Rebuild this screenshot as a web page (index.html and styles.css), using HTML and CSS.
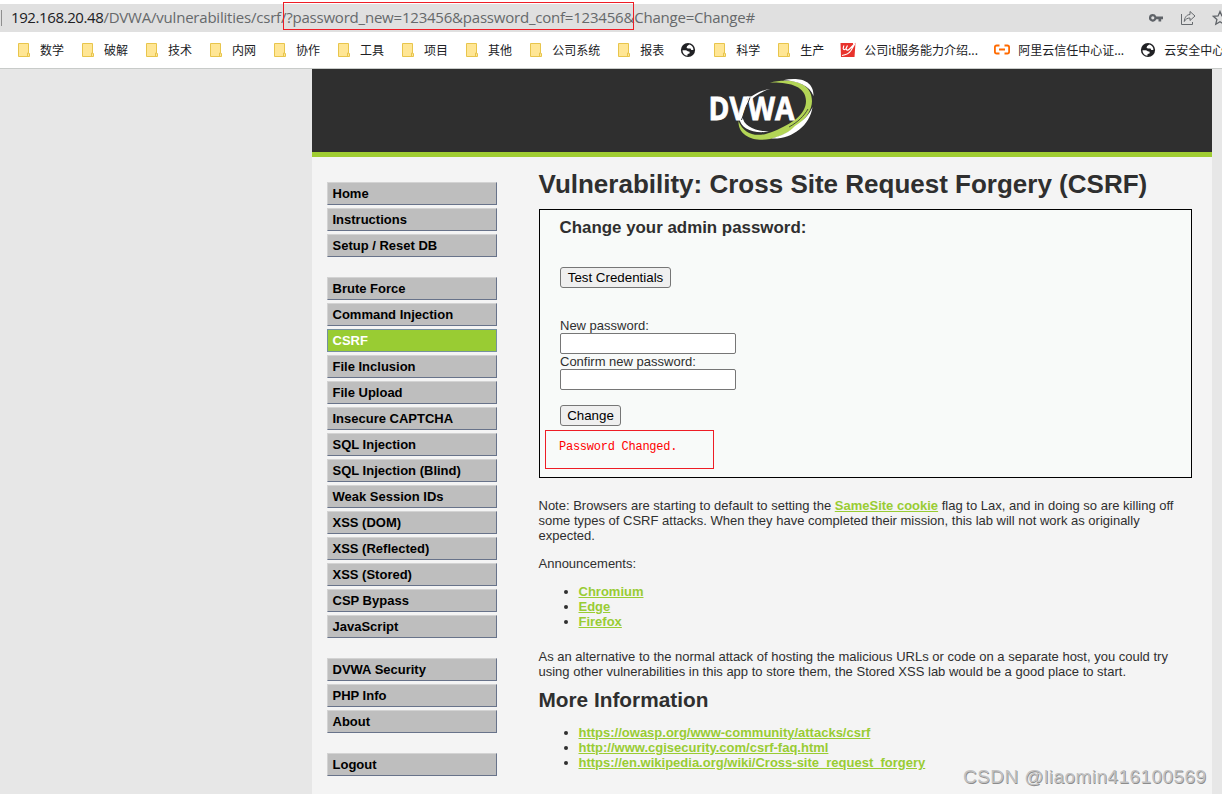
FILE: index.html
```html
<!DOCTYPE html>
<html lang="en">
<head>
<meta charset="utf-8">
<title>Vulnerability: Cross Site Request Forgery (CSRF)</title>
<link rel="stylesheet" href="styles.css">
</head>
<body>
<svg width="0" height="0" class="defs">
  <symbol id="folder" viewBox="0 0 16 16"><path d="M2.500 1.500h10v10h1v3H2.500z" fill="#ffe695" stroke="#e8c54c"/><path d="M11.500 14v-3l1-.8" fill="none" stroke="#e8c54c"/></symbol>
  <symbol id="globe" viewBox="0 0 16 16"><circle cx="8" cy="8" r="7.100" fill="#202124"/><path d="M9.200 2.600L7 4.200 6.600 6l1.600.6h2.300l.8 1.500h2.100c.2-2.700-1.500-5-4.200-5.500zM2.500 8.300h3.600l1.700 1 1.900.4-.2 1.700-1.900.5-.2 1.800C4.600 13.500 2.500 11.300 2.500 8.300z" fill="#fff"/></symbol>
</svg>
<div class="browser">
  <div class="address">
    <span class="sep"></span>
    <div class="url"><span class="host">192.168.20.48</span>/DVWA/vulnerabilities/csrf/?password_new=123456&amp;password_conf=123456&amp;Change=Change#</div>
    <div class="tools">
      <svg width="16" height="16" viewBox="0 0 16 16"><path fill="#5f6368" fill-rule="evenodd" d="M4.800 4a3.800 3.800 0 1 0 3.500 5.200h2.200v2.300h2.700V9.200H15V6.400H8.300A3.800 3.800 0 0 0 4.800 4zm0 2.200a1.600 1.600 0 1 1 0 3.200 1.600 1.600 0 0 1 0-3.200z"/></svg>
      <svg width="16" height="16" viewBox="0 0 16 16"><path fill="none" stroke="#666a6e" d="M1.500 4v10.500h11V12M10 1.500l5 4.500-5 4.500V8C7.500 8 5.500 9 4.300 11.500 4.500 7.500 6.500 4.700 10 4.500z"/></svg>
      <svg width="16" height="16" viewBox="0 0 16 16"><path fill="none" stroke="#5f6368" stroke-width="1.300" d="M8 1.500l1.900 4.400 4.800.4-3.600 3.200 1.100 4.700L8 11.700l-4.200 2.500 1.100-4.700L1.300 6.300l4.800-.4z"/></svg>
    </div>
    <div class="url-mark"></div>
  </div>
  <div class="bookmarks">
    <span><svg><use href="#folder"/></svg>数学</span>
    <span><svg><use href="#folder"/></svg>破解</span>
    <span><svg><use href="#folder"/></svg>技术</span>
    <span><svg><use href="#folder"/></svg>内网</span>
    <span><svg><use href="#folder"/></svg>协作</span>
    <span><svg><use href="#folder"/></svg>工具</span>
    <span><svg><use href="#folder"/></svg>项目</span>
    <span><svg><use href="#folder"/></svg>其他</span>
    <span><svg><use href="#folder"/></svg>公司系统</span>
    <span><svg><use href="#folder"/></svg>报表</span>
    <span><svg><use href="#globe"/></svg></span>
    <span><svg><use href="#folder"/></svg>科学</span>
    <span><svg><use href="#folder"/></svg>生产</span>
    <span><svg viewBox="0 0 16 16"><path d="M.5 1H13v1.500L15.500.8 14.500 15H1z" fill="#e8322c"/><path d="M3.800 3.500L3.200 6.500c0 1.500 2 1.500 2.800 0L7.500 3.500M6.500 6.500c-.5 2 1.500 2 3 .5L15 1.500 11 8.500c-2 3-5.500 4.500-9 5" fill="none" stroke="#fff" stroke-width="1.200"/></svg><b class="w114">公司it服务能力介绍...</b></span>
    <span><svg viewBox="0 0 16 16"><path d="M5.500 3.500H2.700Q.9 3.500.9 5.300v4.400q0 1.800 1.800 1.800h2.800M10.500 3.500h2.800q1.800 0 1.800 1.800v4.400q0 1.800-1.800 1.800h-2.800M5 7.500h6" fill="none" stroke="#ff6a00" stroke-width="1.800"/></svg><b class="w106">阿里云信任中心证...</b></span>
    <span><svg><use href="#globe"/></svg>云安全中心</span>
  </div>
</div>
<div class="container">
  <header class="header">
    <svg width="110" height="64" viewBox="0 0 110 64">
      <path d="M63 11C49 15 35 27 35.500 38c.5 10 12 15 26.500 15.500C47 56 33 51 32.500 40 32 26 47 13 63 11z" fill="#fff"/>
      <path d="M63 4.500C82 0 105 3 105 23c0 17-22 34-42 38C47 64 31 58 31.500 43c6 15 20 17 36 10C84 46 99 37 99 23 99 8 82 4 63 4.500z" fill="#b3d556"/>
      <path d="M76 2.300C90-1 107 1 106.500 18 103 8 91 2.500 76 2.300z" fill="#fff"/>
      <path d="M105.500 29C103 48 84 62 64 60.500 75 58 82 54 88 48 96 43 102 37 105.500 29z" fill="#fff"/>
      <path d="M82 49C91 44 97 38 101 31" fill="none" stroke="#2f2f2f" stroke-width=".8"/>
      <text x="1.500" y="42" textLength="86" lengthAdjust="spacingAndGlyphs" class="logo">DVWA</text>
      <path d="M34.500 42L43 19.500" stroke="#2f2f2f" stroke-width="1"/>
    </svg>
  </header>
  <div class="columns">
    <nav class="menu">
      <ul><li>Home</li><li>Instructions</li><li>Setup / Reset DB</li></ul>
      <ul><li>Brute Force</li><li>Command Injection</li><li class="selected">CSRF</li><li>File Inclusion</li><li>File Upload</li><li>Insecure CAPTCHA</li><li>SQL Injection</li><li>SQL Injection (Blind)</li><li>Weak Session IDs</li><li>XSS (DOM)</li><li>XSS (Reflected)</li><li>XSS (Stored)</li><li>CSP Bypass</li><li>JavaScript</li></ul>
      <ul><li>DVWA Security</li><li>PHP Info</li><li>About</li></ul>
      <ul><li>Logout</li></ul>
    </nav>
    <main class="body">
      <h1>Vulnerability: Cross Site Request Forgery (CSRF)</h1>
      <section class="vulnerable">
        <h3>Change your admin password:</h3>
        <button class="test">Test Credentials</button>
        <form>
          <label>New password:</label>
          <input type="password">
          <label>Confirm new password:</label>
          <input type="password">
          <button type="button" class="change">Change</button>
        </form>
        <pre>Password Changed.</pre>
      </section>
      <p class="note">Note: Browsers are starting to default to setting the <a>SameSite cookie</a> flag to Lax, and in doing so are killing off<br>some types of CSRF attacks. When they have completed their mission, this lab will not work as originally<br>expected.</p>
      <p>Announcements:</p>
      <ul class="links"><li><a>Chromium</a></li><li><a>Edge</a></li><li><a>Firefox</a></li></ul>
      <p class="alt">As an alternative to the normal attack of hosting the malicious URLs or code on a separate host, you could try<br>using other vulnerabilities in this app to store them, the Stored XSS lab would be a good place to start.</p>
      <h2>More Information</h2>
      <ul class="links"><li><a>https://owasp.org/www-community/attacks/csrf</a></li><li><a>http://www.cgisecurity.com/csrf-faq.html</a></li><li><a>https://en.wikipedia.org/wiki/Cross-site_request_forgery</a></li></ul>
    </main>
  </div>
</div>
<div class="watermark">CSDN @liaomin416100569</div>
</body>
</html>
```
FILE: styles.css
```css
* { box-sizing: border-box; }
html, body { height: 794px; overflow: hidden; }
body { margin: 0; background: #e7e7e7; color: #2f2f2f; font: 13px/15px "Liberation Sans", Arial, sans-serif; position: relative; }
.defs { position: absolute; }
.browser { height: 69px; padding-top: 4px; background: #fff; border-bottom: 1px solid #c8cbc9; }
.address { position: relative; display: flex; align-items: center; height: 28px; background: #e0e0e0; }
.sep { width: 1px; height: 16px; margin-left: 1px; background: #8f8f8f; }
.url { margin: -2px 0 0 9px; font: 15px/28px "Open Sans", "Noto Sans", sans-serif; color: #66696b; white-space: nowrap; letter-spacing: -.21px; }
.host { color: #202124; letter-spacing: -.4px; }
.tools { position: absolute; left: 1148px; top: 6px; display: flex; gap: 16px; }
.tools svg { flex: none; }
.url-mark { position: absolute; left: 283px; top: -2px; width: 351px; height: 28px; border: 1px solid #ee1c25; }
.bookmarks { display: flex; gap: 16px; height: 36px; padding-left: 16px; align-items: center; white-space: nowrap; overflow: hidden; font: 12px/18px "Noto Sans CJK SC", sans-serif; color: #202124; }
.bookmarks span { display: flex; align-items: center; gap: 8px; flex: none; }
.bookmarks svg { width: 16px; height: 16px; flex: none; }
.bookmarks b { font-weight: 400; }
.w114 { width: 114px; }
.w106 { width: 106px; }
.container { width: 900px; height: 725px; margin-left: 312px; background: #f4f4f4; }
.header { display: flex; justify-content: center; height: 88px; padding-top: 9px; background: #2f2f2f; border-bottom: 5px solid #a0cd32; }
.logo { font: bold 33px "Open Sans", sans-serif; fill: #fff; stroke: #fff; stroke-width: .8px; }
.columns { display: flex; }
.menu { width: 227px; padding: 25px 0 0 15px; }
.menu ul { list-style: none; margin: 0 0 20px; padding: 0; width: 170px; display: flex; flex-direction: column; gap: 3px; }
.menu li { height: 23px; padding-left: 4.5px; border: 1px solid; border-color: #d3d3d3 #68738a #68738a #d3d3d3; background: #bebebe; color: #000; font-weight: bold; line-height: 21px; }
.menu li.selected { background: #9c3; color: #fff; border-color: #7590a0; }
.body { width: 653px; }
h1 { margin: 12px 0 10px; font-size: 26px; line-height: 30px; white-space: nowrap; text-indent: -.5px; }
.vulnerable { position: relative; height: 269px; padding: 8px 20px; background: #f8faf9; border: 1px solid #000; }
h3 { margin: 0; font-size: 16.9px; line-height: 19px; text-indent: -.5px; }
button { height: 21px; padding: 0; font: 13.333px "Liberation Sans", Arial, sans-serif; color: #000; background: #efefef; border: 1px solid #767676; border-radius: 3px; }
.test { display: block; width: 111px; margin-top: 30px; }
.change { width: 61px; margin-top: 15px; }
form { display: flex; flex-direction: column; align-items: flex-start; margin-top: 30px; }
input { width: 176px; height: 21px; border: 1px solid #767676; border-radius: 2px; background: #fff; }
pre { position: absolute; left: 5px; top: 220px; width: 169px; height: 39px; margin: 0; padding: 9px 13px; border: 1px solid #ee1c25; color: red; font: 12px/15px "Liberation Mono", monospace; letter-spacing: -.25px; }
p { margin: 13px 0 13px -.5px; white-space: nowrap; }
.note { margin-top: 20px; }
a { color: #9c3; font-weight: bold; text-decoration: underline; }
.links { margin: 13px 0; padding-left: 39.5px; }
.alt { margin: 20px 0 8px -.5px; }
h2 { margin: 0; font-size: 20.8px; line-height: 25px; text-indent: -.5px; }
.watermark { position: absolute; left: 963px; top: 766px; font-size: 19px; line-height: 22px; letter-spacing: .45px; color: #c2c2c2; text-shadow: .7px .7px 0 #8c8c8c; white-space: nowrap; }
```
